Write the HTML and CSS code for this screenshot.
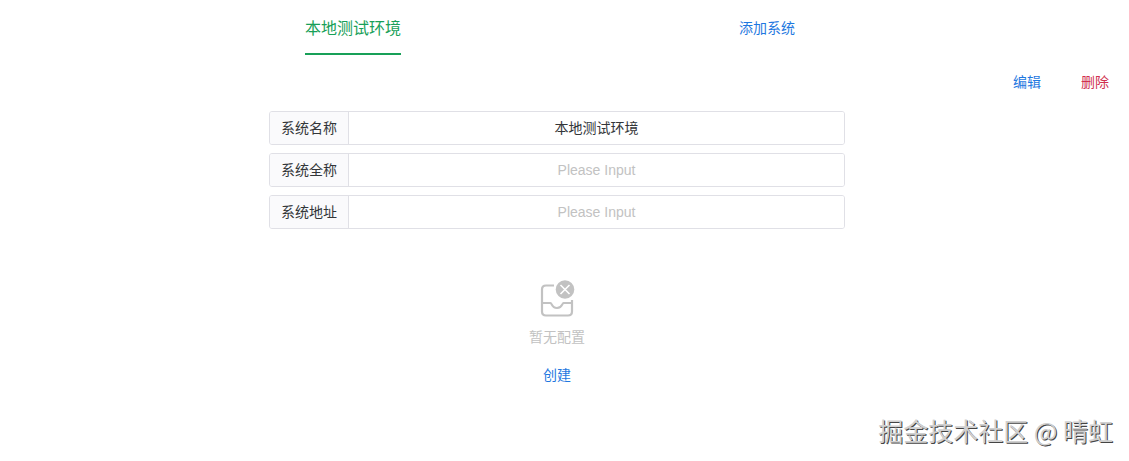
FILE: index.html
```html
<!DOCTYPE html>
<html lang="zh-CN">
<head>
<meta charset="utf-8">
<title>本地测试环境</title>
<link rel="stylesheet" href="styles.css">
</head>
<body>
<nav class="tabs">
  <button class="tab active" type="button">本地测试环境</button>
  <button class="link" type="button">添加系统</button>
</nav>
<div class="actions">
  <button class="link" type="button">编辑</button>
  <button class="link danger" type="button">删除</button>
</div>
<main class="content">
  <form class="form">
    <div class="field">
      <label class="label" for="name">系统名称</label>
      <input class="input" id="name" type="text" placeholder="Please Input" value="本地测试环境">
    </div>
    <div class="field">
      <label class="label" for="full">系统全称</label>
      <input class="input" id="full" type="text" placeholder="Please Input">
    </div>
    <div class="field">
      <label class="label" for="address">系统地址</label>
      <input class="input" id="address" type="text" placeholder="Please Input">
    </div>
  </form>
  <section class="empty">
    <svg class="empty-icon" viewBox="0 0 40 40" aria-hidden="true">
      <g fill="none" stroke="#c2c2c2" stroke-width="2.200">
        <path d="M17 5.500H9Q5 5.500 5 9.500V31.500Q5 35.500 9 35.500H31Q35 35.500 35 31.500V20"/>
        <path d="M5 23H13.500C15 23 14.500 28 20 28S25 23 26.500 23H35"/>
      </g>
      <circle cx="28" cy="9.500" r="9.300" fill="#c2c2c2"/>
      <path d="M23.500 5L32.500 14M32.500 5L23.500 14" stroke="#fff" stroke-width="1.600"/>
    </svg>
    <p class="empty-text">暂无配置</p>
    <button class="link" type="button">创建</button>
  </section>
</main>
<div class="watermark">掘金技术社区 @ 晴虹</div>
</body>
</html>
```
FILE: styles.css
```css
* {
  box-sizing: border-box;
}

body {
  position: relative;
  min-height: 100vh;
  margin: 0;
  padding-right: 15px;
  background: #fff;
  color: #333639;
  font: 14px/22px "Liberation Sans", "Noto Sans CJK SC", sans-serif;
}

button {
  padding: 0;
  border: 0;
  background: none;
  font: inherit;
  cursor: pointer;
}

.tabs {
  display: grid;
  grid-template-columns: 1fr 1fr;
  justify-items: center;
  align-items: center;
  height: 56px;
  padding: 0 140px 0 146px;
}

.tab {
  height: 54px;
  padding-top: 3px;
  border-bottom: 2px solid transparent;
  font-size: 16px;
}

.active {
  border-color: #18a058;
  color: #18a058;
}

.link {
  color: #1f78e0;
}

.danger {
  color: #d03050;
}

.actions {
  display: flex;
  justify-content: flex-end;
  gap: 40px;
  padding: 15px 5px 0 0;
}

.content {
  display: flex;
  flex-direction: column;
  align-items: center;
  padding-top: 18px;
}

.form {
  display: flex;
  flex-direction: column;
  gap: 8px;
  width: 100%;
  max-width: 576px;
}

.field {
  display: flex;
  height: 34px;
  border: 1px solid #e0e0e6;
  border-radius: 3px;
  overflow: hidden;
}

.label {
  padding: 0 11px;
  border-right: 1px solid #e0e0e6;
  background: #fafafc;
  line-height: 32px;
}

.input {
  flex: 1;
  min-width: 0;
  padding: 0 12px;
  border: 0;
  outline: 0;
  background: #fff;
  color: #333639;
  font: inherit;
  text-align: center;
}

.input::placeholder {
  color: #c2c2c2;
  opacity: 1;
}

.empty {
  display: flex;
  flex-direction: column;
  align-items: center;
  padding-top: 51px;
}

.empty-icon {
  width: 40px;
  height: 40px;
}

.empty-text {
  margin: 6px 0 16px;
  color: #c2c2c2;
}

.watermark {
  position: absolute;
  right: 16px;
  bottom: 13px;
  color: #d0d0d0;
  font: 25px/36px "Noto Sans CJK SC", sans-serif;
  text-shadow: 1px 1px 0 #444;
}
```
